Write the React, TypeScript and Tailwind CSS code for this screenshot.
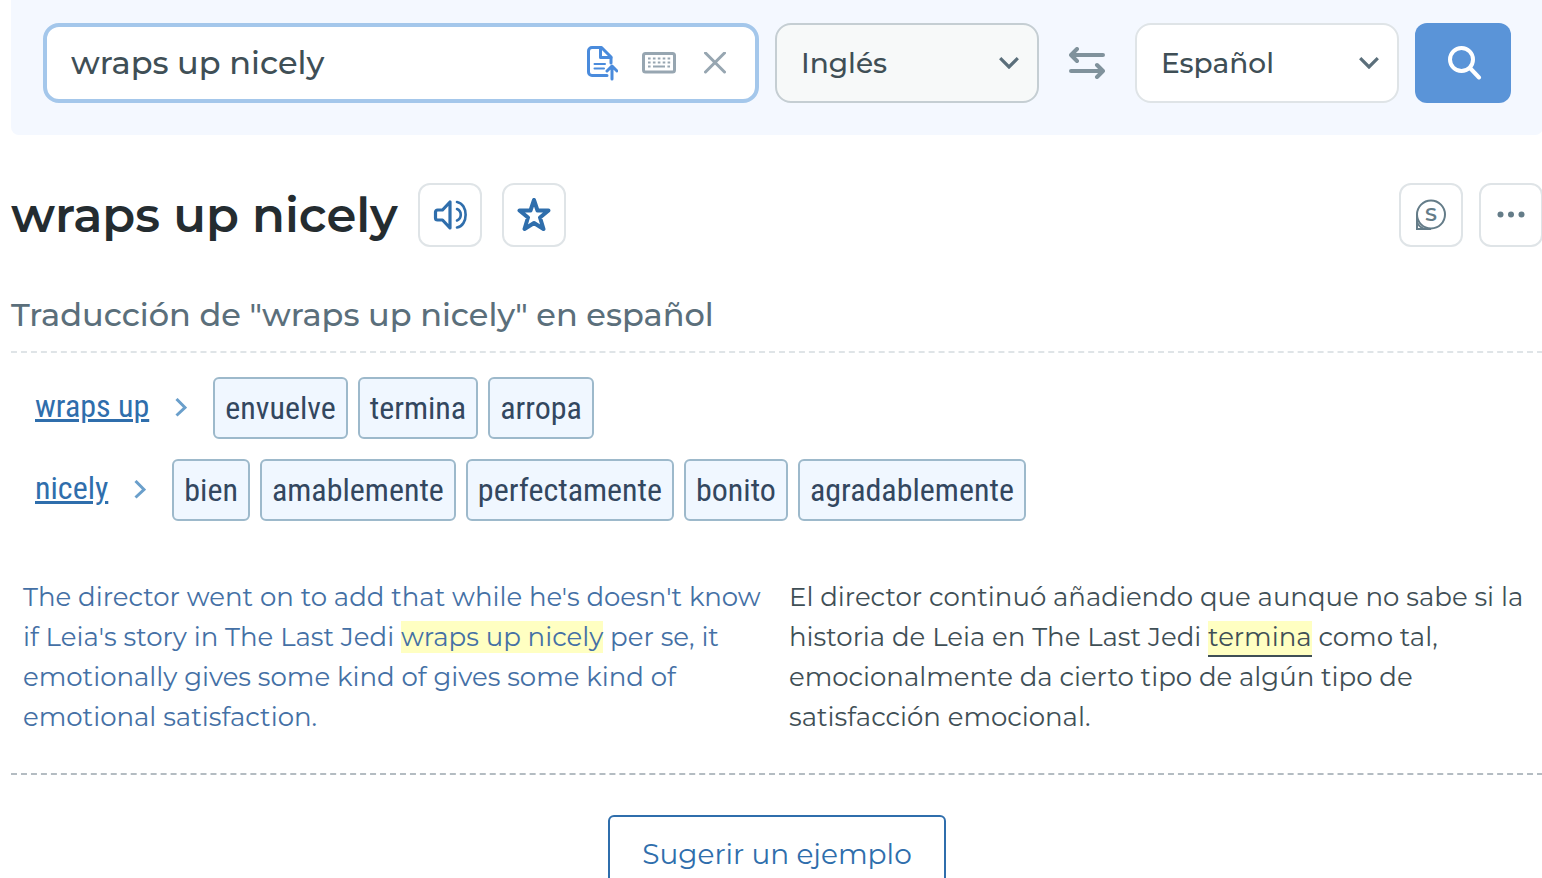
import { useState } from "react";

const rows = [
  { term: "wraps up", words: ["envuelve", "termina", "arropa"] },
  {
    term: "nicely",
    words: ["bien", "amablemente", "perfectamente", "bonito", "agradablemente"],
  },
];

interface LanguageSelectProps {
  label: string;
  value: string;
  onChange: (value: string) => void;
  className: string;
}

const LanguageSelect: React.FC<LanguageSelectProps> = ({
  label,
  value,
  onChange,
  className,
}) => {
  return (
    <div className="relative w-[264px] shrink-0">
      <select
        aria-label={label}
        value={value}
        onChange={(e) => onChange(e.target.value)}
        className={`h-20 w-full appearance-none rounded-2xl border-2 px-6 text-[28px] font-medium text-[#3f4f56] ${className}`}
      >
        <option>Inglés</option>
        <option>Español</option>
      </select>
      <svg
        viewBox="0 0 20 12"
        className="pointer-events-none absolute top-[34px] right-5 h-3 w-5"
        fill="none"
        stroke="#5b6f7b"
        strokeWidth="3.2"
      >
        <path d="M1.2 1.2 10 10 18.8 1.2" />
      </svg>
    </div>
  );
};

const SearchBar = () => {
  const [query, setQuery] = useState("wraps up nicely");
  const [from, setFrom] = useState("Inglés");
  const [to, setTo] = useState("Español");

  return (
    <form
      onSubmit={(e) => e.preventDefault()}
      className="flex items-center rounded-b-lg bg-[#f4f8ff] px-8 pt-[23px] pb-8"
    >
      <div className="mr-4 flex h-20 min-w-0 flex-1 items-center rounded-2xl border-4 border-[#a4c7eb] bg-white px-6">
        <input
          type="text"
          aria-label="Texto"
          value={query}
          onChange={(e) => setQuery(e.target.value)}
          className="min-w-0 flex-1 text-[32px] font-medium text-[#3f4f56] outline-none"
        />
        <button type="button" aria-label="Subir documento" className="mr-6">
          <svg viewBox="0 0 32 36" className="h-9 w-8" fill="none" stroke="#4a8bdc" strokeLinecap="round" strokeLinejoin="round">
            <path d="M21 30.5H6A3.5 3.5 0 0 1 2.500 27V6A3.500 3.500 0 0 1 6 2.500h9.500L25 12v6" strokeWidth="3" />
            <path d="M14.500 3v9.500H25" strokeWidth="3" />
            <path d="M8.500 19H19M8.500 23.500H18" strokeWidth="2" />
            <path d="M26 34V22M21 26l5-5 5 5" strokeWidth="3" />
          </svg>
        </button>
        <button type="button" aria-label="Teclado" className="mr-7">
          <svg viewBox="0 0 34 22" className="h-[22px] w-[34px]" fill="none" stroke="#97a6b1">
            <rect x="1.500" y="1.500" width="31" height="18.500" rx="2" strokeWidth="3" />
            <path d="M6 6.500h23M6 10.500h23" strokeWidth="2.200" strokeDasharray="2.600 2.300" />
            <path d="M6 14.500h2.600M11 14.500h12M25.400 14.500H28" strokeWidth="2.200" />
          </svg>
        </button>
        <button type="button" aria-label="Borrar" onClick={() => setQuery("")} className="mr-[5px]">
          <svg viewBox="0 0 22 22" className="size-[22px]" fill="none" stroke="#97a6b1" strokeWidth="3" strokeLinecap="round">
            <path d="M1.500 1l19 19M20.500 1l-19 19" />
          </svg>
        </button>
      </div>

      <LanguageSelect label="Idioma de origen" value={from} onChange={setFrom} className="border-[#c5ced3] bg-[#f7f9f9]" />

      <button
        type="button"
        aria-label="Intercambiar idiomas"
        onClick={() => {
          setFrom(to);
          setTo(from);
        }}
        className="flex h-20 w-24 shrink-0 items-center justify-center"
      >
        <svg viewBox="0 0 36 32" className="h-8 w-9" fill="none" stroke="#80929c" strokeWidth="4" strokeLinecap="round" strokeLinejoin="round">
          <path d="M34 8H2M8 2 2 8l6 6M2 24h32M28 18l6 6-6 6" />
        </svg>
      </button>

      <LanguageSelect label="Idioma de destino" value={to} onChange={setTo} className="border-[#dfe4e7] bg-white" />

      <button
        type="submit"
        aria-label="Buscar"
        className="ml-4 flex h-20 w-24 shrink-0 items-center justify-center rounded-xl bg-[#5a94d8]"
      >
        <svg viewBox="0 0 34 34" className="ml-1 size-[34px]" fill="none" stroke="#fff" strokeWidth="4" strokeLinecap="round">
          <circle cx="13.500" cy="13.500" r="11.500" />
          <path d="M22 22l9 9.500" />
        </svg>
      </button>
    </form>
  );
};

interface IconButtonProps {
  label: string;
  children: React.ReactNode;
}

const IconButton: React.FC<IconButtonProps> = ({ label, children }) => {
  return (
    <button
      type="button"
      aria-label={label}
      className="flex size-16 shrink-0 items-center justify-center rounded-xl border-2 border-[#dfe4e7] bg-white"
    >
      {children}
    </button>
  );
};

export default function App() {
  return (
    <div className="min-h-screen overflow-hidden bg-white font-['Montserrat','Inter',sans-serif]">
      <main className="-mr-px pl-[11px]">
        <SearchBar />

        {/* Title */}
        <div className="mt-12 flex h-16 items-center gap-5">
          <h1 className="text-5xl font-semibold text-[#242c30]">wraps up nicely</h1>
          <IconButton label="Escuchar">
            <svg viewBox="0 0 34 30" className="h-[30px] w-[34px]" fill="none" stroke="#2f6eac" strokeLinecap="round" strokeLinejoin="round">
              <path d="M17 2v26L9.500 20H4.500a2 2 0 0 1-2-2v-6a2 2 0 0 1 2-2h5z" strokeWidth="3.200" />
              <path d="M24 9c5 2 5 9.500 0 11.500M24 2c11.500 2 11.500 23.500 0 25.500" strokeWidth="2.600" />
            </svg>
          </IconButton>
          <IconButton label="Favorito">
            <svg viewBox="0 0 34 34" className="size-[34px]" fill="none" stroke="#2f6eac" strokeWidth="4" strokeLinejoin="round">
              <path d="M17 2l3.500 10.500H31.500l-8.500 7 3.500 11.500-9.500-6-9.500 6 3.500-11.500-8.500-7h11z" />
            </svg>
          </IconButton>
          <div className="ml-auto flex gap-4">
            <IconButton label="Sinónimos">
              <svg viewBox="0 0 32 32" className="size-8" fill="none" stroke="#647c88" strokeWidth="2">
                <circle cx="16" cy="15.500" r="14" />
                <path d="M2 15v15h14M2 23c1 3 3 5 7 7" />
                <text x="16" y="22" textAnchor="middle" fontSize="19" fontWeight="600" fill="#647c88" stroke="none">
                  S
                </text>
              </svg>
            </IconButton>
            <IconButton label="Más opciones">
              <svg viewBox="0 0 28 8" className="h-2 w-7" fill="#647c88">
                <circle cx="3.500" cy="3.500" r="3" />
                <circle cx="14" cy="3.500" r="3" />
                <circle cx="24.500" cy="3.500" r="3" />
              </svg>
            </IconButton>
          </div>
        </div>

        {/* Translations */}
        <h2 className="mt-12 border-b-2 border-dashed border-[#dfe4e7] pb-4 text-[32px] leading-10 font-medium text-[#5b6f7b]">
          Traducción de "wraps up nicely" en español
        </h2>
        <div className="mt-6 flex flex-col gap-5 pl-6 font-['Roboto_Condensed','Liberation_Sans_Narrow',sans-serif] text-[32px]">
          {rows.map((row) => (
            <div key={row.term} className="flex items-center">
              <a href="#" className="pb-1 text-[#2f6eac] underline decoration-3 underline-offset-2">
                {row.term}
              </a>
              <svg viewBox="0 0 12 20" className="mx-[26px] h-5 w-3" fill="none" stroke="#6a9fcb" strokeWidth="3">
                <path d="M1.500 1 10 9.500l-8.500 8" />
              </svg>
              <div className="flex gap-[10px]">
                {row.words.map((word) => (
                  <button
                    key={word}
                    type="button"
                    className="h-[62px] rounded-md border-2 border-[#9db9cb] bg-[#f0f7ff] px-[10px] text-[#33475f]"
                  >
                    {word}
                  </button>
                ))}
              </div>
            </div>
          ))}
        </div>

        {/* Example */}
        <div className="mt-14 grid grid-cols-2 border-b-2 border-dashed border-[#b4bcc2] pb-9 text-[26px] leading-10">
          <p className="px-3 text-[#4470a5]">
            The director went on to add that while he's doesn't know if Leia's story in The Last Jedi{" "}
            <mark className="bg-[#ffffc2] text-inherit">wraps up nicely</mark> per se, it emotionally gives some kind of
            gives some kind of emotional satisfaction.
          </p>
          <p className="px-3 text-[#3f4f56]">
            El director continuó añadiendo que aunque no sabe si la historia de Leia en The Last Jedi{" "}
            <mark className="border-b-2 border-[#3f4f56] bg-[#ffffc2] pb-0.5 text-inherit">termina</mark> como tal,
            emocionalmente da cierto tipo de algún tipo de satisfacción emocional.
          </p>
        </div>
        <div className="mt-10 flex h-[63px] justify-center">
          <button
            type="button"
            className="h-[78px] shrink-0 rounded-md border-2 border-[#2f6eac] px-8 text-[28px] text-[#2f6eac]"
          >
            Sugerir un ejemplo
          </button>
        </div>
      </main>
    </div>
  );
}
